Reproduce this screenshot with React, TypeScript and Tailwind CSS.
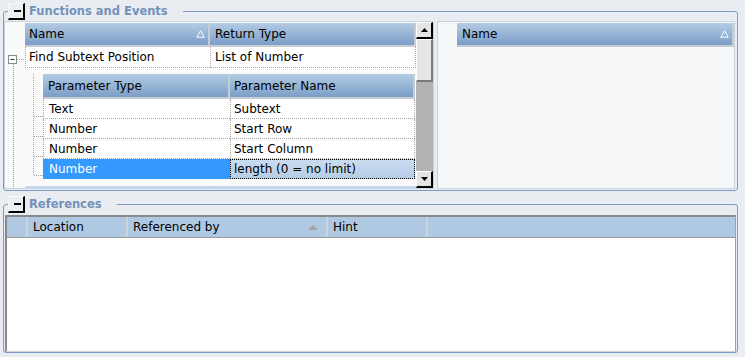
import React from "react"

const font = "font-['DejaVu_Sans','Liberation_Sans',sans-serif]"

function CollapseButton() {
    return (
        <div className="w-[17px] h-[17px] bg-[#eceef1] border-t border-l border-t-[#f8f9fa] border-l-[#f8f9fa] border-r-2 border-b-2 border-r-black border-b-black flex items-center justify-center">
            <div className="w-[7px] h-[2px] bg-black ml-[3px]" />
        </div>
    )
}

function GroupBox({ title, className, children }: { title: string; className?: string; children: React.ReactNode }) {
    return (
        <fieldset className={`ml-[3px] w-[735px] border border-[#7b9bc4] rounded-[3px] ${className ?? ""}`}>
            <legend className="ml-[4px] pr-[15px]">
                <div className="flex items-center gap-[4px]">
                    <CollapseButton />
                    <span className="text-[11.5px] font-bold text-[#7392b9] leading-none">{title}</span>
                </div>
            </legend>
            {children}
        </fieldset>
    )
}

const SortUp = ({ color = "white" }: { color?: string }) => (
    <svg width="9" height="8" viewBox="0 0 9 8" className="shrink-0">
        <polygon points="4.5,0.8 8.2,7.2 0.8,7.2" fill="none" stroke={color} strokeWidth="1" />
    </svg>
)

function HeaderCell({ label, w, sort, pl = "pl-[4px]" }: { label: string; w: string; sort?: boolean; pl?: string }) {
    return (
        <div className={`${w} h-full flex items-center justify-between ${pl} pr-[3px] bg-linear-to-b from-[#b4cce4] to-[#7b9ec7] border-r-2 border-b-2 border-[#c7ccd2] text-black`}>
            <span>{label}</span>
            {sort && <SortUp />}
        </div>
    )
}

function ScrollButton({ down }: { down?: boolean }) {
    return (
        <div className="h-[17px] bg-[#e4e4e4] border-t border-l border-t-white border-l-white border-r-2 border-b-2 border-r-black border-b-black flex items-center justify-center">
            <svg width="7" height="4" viewBox="0 0 7 4">
                <polygon points={down ? "0,0 7,0 3.5,4" : "3.5,0 7,4 0,4"} fill="black" />
            </svg>
        </div>
    )
}

function Scrollbar() {
    return (
        <div className="w-[17px] flex flex-col bg-[#b3b3b3]">
            <ScrollButton />
            <div className="h-[43px] bg-[#e6e6e6] border-t border-l border-white border-r-2 border-b-2 border-r-[#7a7a7a] border-b-[#7a7a7a]" />
            <div className="flex-1" />
            <ScrollButton down />
        </div>
    )
}

const params = [
    { type: "Text", name: "Subtext" },
    { type: "Number", name: "Start Row" },
    { type: "Number", name: "Start Column" },
    { type: "Number", name: "length (0 = no limit)", selected: true },
]

export default function App() {
    return (
        <div className={`w-[745px] h-[357px] bg-[#e9edf2] overflow-hidden pt-[3px] ${font} text-[12px] text-black`}>
            <GroupBox title="Functions and Events" className="pb-[1px]">
                <div className="flex gap-[3px] pt-[1px]">
                    {/* Functions tree grid */}
                    <div className="w-[430px] h-[168px] border border-[#c9d2dc] bg-[#fafafa] flex overflow-hidden">
                        <div className="flex-1 overflow-hidden pt-[1px]">
                            <div className="flex h-[24px] pl-[20px]">
                                <HeaderCell label="Name" w="w-[185px]" sort />
                                <HeaderCell label="Return Type" w="w-[206px]" pl="pl-[5px]" />
                            </div>
                            <div className="flex">
                                <svg width="20" height="150" className="shrink-0">
                                    <rect x="3.5" y="8.5" width="8" height="8" fill="white" stroke="#8c8c8c" />
                                    <line x1="5.5" y1="12.5" x2="9.5" y2="12.5" stroke="#333" />
                                    <line x1="12" y1="12.5" x2="20" y2="12.5" stroke="#a0a0a0" strokeDasharray="1 1" />
                                    <line x1="8.5" y1="17" x2="8.5" y2="150" stroke="#a0a0a0" strokeDasharray="1 1" />
                                </svg>
                                <div className="flex flex-col">
                                    <div className="flex h-[21px]">
                                        <div className="w-[185px] h-full flex items-center pl-[3px] bg-white border-l border-b border-dotted border-[#a8a8a8]">
                                            Find Subtext Position
                                        </div>
                                        <div className="w-[206px] h-full flex items-center pl-[4px] bg-white border-l border-r border-b border-dotted border-[#a8a8a8]">
                                            List of Number
                                        </div>
                                    </div>
                                    <div className="flex pt-[6px]">
                                        <svg width="18" height="112" className="shrink-0">
                                            <line x1="8.5" y1="-6" x2="8.5" y2="101" stroke="#a0a0a0" strokeDasharray="1 1" />
                                            <line x1="9" y1="42.5" x2="18" y2="42.5" stroke="#a0a0a0" strokeDasharray="1 1" />
                                            <line x1="9" y1="62.5" x2="18" y2="62.5" stroke="#a0a0a0" strokeDasharray="1 1" />
                                            <line x1="9" y1="82.5" x2="18" y2="82.5" stroke="#a0a0a0" strokeDasharray="1 1" />
                                            <line x1="9" y1="101.5" x2="18" y2="101.5" stroke="#a0a0a0" strokeDasharray="1 1" />
                                        </svg>
                                        <div className="flex flex-col">
                                            <div className="flex h-[25px]">
                                                <HeaderCell label="Parameter Type" w="w-[187px]" pl="pl-[5px]" />
                                                <HeaderCell label="Parameter Name" w="w-[185px]" pl="pl-[4px]" />
                                            </div>
                                            {params.map((p, i) => (
                                                <div key={i} className="flex h-[20px]">
                                                    <div className={`w-[187px] h-full flex items-center pl-[5px] border-l border-b border-dotted ${p.selected ? "bg-[#3399ff] text-white border-[#3399ff]" : "bg-white border-[#a8a8a8]"}`}>
                                                        {p.type}
                                                    </div>
                                                    <div className={`w-[185px] h-full flex items-center pl-[3px] border border-dotted ${p.selected ? "bg-linear-to-b from-[#c9dcf0] to-[#b6cde7] border-black" : "bg-white border-t-0 border-[#a8a8a8]"}`}>
                                                        {p.name}
                                                    </div>
                                                </div>
                                            ))}
                                            <div className="h-[7px]" />
                                        </div>
                                    </div>
                                    <div className="flex h-[20px]">
                                        <div className="w-[185px] bg-[#c5d7ec] border-r-2 border-[#c7ccd2]" />
                                        <div className="w-[206px] bg-[#c5d7ec]" />
                                    </div>
                                </div>
                            </div>
                        </div>
                        <Scrollbar />
                    </div>

                    {/* Events list */}
                    <div className="w-[298px] h-[168px] border border-[#c9d2dc] bg-[#f6f7f8] pl-[19px] pt-[1px]">
                        <div className="flex h-[24px]">
                            <HeaderCell label="Name" w="w-full" sort pl="pl-[5px]" />
                        </div>
                    </div>
                </div>
            </GroupBox>

            <GroupBox title="References" className="mt-[5px]">
                <div className="pt-[2px] pl-[1px]">
                    <div className="w-[731px] h-[137px] bg-white border-t-2 border-l-2 border-t-[#8a8a8a] border-l-[#8a8a8a] border-r border-b border-r-[#a0a0a0] border-b-[#d4d4d4]">
                        <div className="flex h-[21px] bg-[#b0c9e2] border-b border-[#9a9a9a]">
                            <div className="w-[21px] border-r-2 border-[#cdd3da]" />
                            <div className="w-[100px] flex items-center pl-[5px] border-r-2 border-[#cdd3da]">Location</div>
                            <div className="w-[200px] flex items-center justify-between pl-[5px] pr-[8px] border-r-2 border-[#cdd3da]">
                                <span>Referenced by</span>
                                <svg width="10" height="5" viewBox="0 0 10 5">
                                    <polygon points="5,0 10,5 0,5" fill="#a3a3a3" />
                                </svg>
                            </div>
                            <div className="w-[100px] flex items-center pl-[5px] border-r-2 border-[#cdd3da]">Hint</div>
                            <div className="flex-1" />
                        </div>
                    </div>
                </div>
            </GroupBox>
        </div>
    )
}
